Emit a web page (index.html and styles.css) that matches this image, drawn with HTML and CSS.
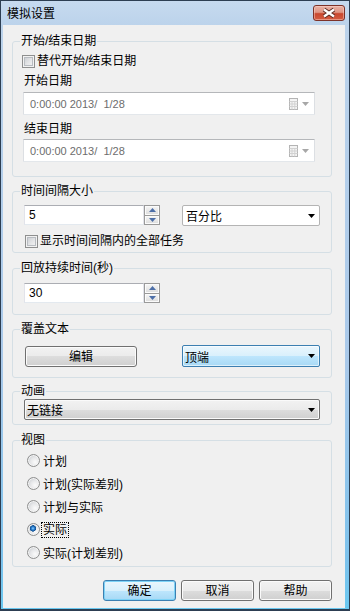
FILE: index.html
```html
<!DOCTYPE html>
<html lang="zh-CN">
<head>
<meta charset="utf-8">
<title>模拟设置</title>
<link rel="stylesheet" href="styles.css">
</head>
<body>
<div class="window">
  <div class="titlebar">
    <span class="title">模拟设置</span>
    <span class="close">
      <svg width="30" height="14" viewBox="0 0 30 14">
        <path d="M10 3.6 L20 10.4 M20 3.6 L10 10.4" stroke="#5a2a22" stroke-width="4.2" fill="none"/>
        <path d="M10 3.6 L20 10.4 M20 3.6 L10 10.4" stroke="#ffffff" stroke-width="2.4" fill="none"/>
      </svg>
    </span>
  </div>
  <div class="client">
    <fieldset class="group g1">
      <legend>开始/结束日期</legend>
      <div class="checkrow c1"><span class="box"></span><span>替代开始/结束日期</span></div>
      <div class="lbl">开始日期</div>
      <div class="datebox d1">
        <span class="dtext">0:00:00 2013/  1/28</span>
        <svg class="cal" width="9" height="12" viewBox="0 0 9 12"><rect x="0.5" y="0.5" width="8" height="11" fill="#f4f4f4" stroke="#b4b4b4"/><path d="M0.5 3.5H8.5M0.5 6H8.5M0.5 8.5H8.5M3 3.5V11.5M5.8 3.5V11.5" stroke="#d2d2d2" fill="none"/></svg>
        <svg class="dd" width="7" height="4" viewBox="0 0 7 4"><polygon points="0,0 7,0 3.5,4" fill="#a7a7a7"/></svg>
      </div>
      <div class="lbl l2">结束日期</div>
      <div class="datebox d2">
        <span class="dtext">0:00:00 2013/  1/28</span>
        <svg class="cal" width="9" height="12" viewBox="0 0 9 12"><rect x="0.5" y="0.5" width="8" height="11" fill="#f4f4f4" stroke="#b4b4b4"/><path d="M0.5 3.5H8.5M0.5 6H8.5M0.5 8.5H8.5M3 3.5V11.5M5.8 3.5V11.5" stroke="#d2d2d2" fill="none"/></svg>
        <svg class="dd" width="7" height="4" viewBox="0 0 7 4"><polygon points="0,0 7,0 3.5,4" fill="#a7a7a7"/></svg>
      </div>
    </fieldset>

    <fieldset class="group g2">
      <legend>时间间隔大小</legend>
      <div class="row r2">
        <div class="spin">
          <span class="spin-text">5</span>
          <span class="spin-btns">
            <span class="sb"><svg width="7" height="4" viewBox="0 0 7 4"><polygon points="0,4 7,4 3.5,0" fill="#4d6fa8"/></svg></span>
            <span class="sb"><svg width="7" height="4" viewBox="0 0 7 4"><polygon points="0,0 7,0 3.5,4" fill="#4d6fa8"/></svg></span>
          </span>
        </div>
        <div class="combo white pct">
          <span>百分比</span>
          <svg class="arrow" width="7" height="4" viewBox="0 0 7 4"><polygon points="0,0 7,0 3.5,4" fill="#000"/></svg>
        </div>
      </div>
      <div class="checkrow c2"><span class="box"></span><span>显示时间间隔内的全部任务</span></div>
    </fieldset>

    <fieldset class="group g3">
      <legend>回放持续时间(秒)</legend>
      <div class="row r3">
        <div class="spin">
          <span class="spin-text">30</span>
          <span class="spin-btns">
            <span class="sb"><svg width="7" height="4" viewBox="0 0 7 4"><polygon points="0,4 7,4 3.5,0" fill="#4d6fa8"/></svg></span>
            <span class="sb"><svg width="7" height="4" viewBox="0 0 7 4"><polygon points="0,0 7,0 3.5,4" fill="#4d6fa8"/></svg></span>
          </span>
        </div>
      </div>
    </fieldset>

    <fieldset class="group g4">
      <legend>覆盖文本</legend>
      <div class="row r4">
        <div class="btn edit">编辑</div>
        <div class="combo blue top">
          <span>顶端</span>
          <svg class="arrow" width="7" height="4" viewBox="0 0 7 4"><polygon points="0,0 7,0 3.5,4" fill="#000"/></svg>
        </div>
      </div>
    </fieldset>

    <fieldset class="group g5">
      <legend>动画</legend>
      <div class="combo gray anim">
        <span>无链接</span>
        <svg class="arrow" width="7" height="4" viewBox="0 0 7 4"><polygon points="0,0 7,0 3.5,4" fill="#000"/></svg>
      </div>
    </fieldset>

    <fieldset class="group g6">
      <legend>视图</legend>
      <div class="radiorow first"><span class="radio"></span><span>计划</span></div>
      <div class="radiorow"><span class="radio"></span><span>计划(实际差别)</span></div>
      <div class="radiorow"><span class="radio"></span><span>计划与实际</span></div>
      <div class="radiorow"><span class="radio on"></span><span class="focus">实际</span></div>
      <div class="radiorow"><span class="radio"></span><span>实际(计划差别)</span></div>
    </fieldset>

    <div class="buttons">
      <div class="btn default">确定</div>
      <div class="btn">取消</div>
      <div class="btn">帮助</div>
    </div>
  </div>
</div>
</body>
</html>
```
FILE: styles.css
```css
* { box-sizing: border-box; }
html, body { margin: 0; padding: 0; }
body {
  width: 350px;
  height: 611px;
  overflow: hidden;
  font-family: "Liberation Sans", "Noto Sans CJK SC", sans-serif;
  font-size: 12px;
  color: #000;
  background: #fff;
}
.window {
  width: 350px;
  height: 611px;
  border: 1px solid #2d3e52;
  border-bottom-width: 2px;
  padding: 0 4px 1px 2px;
  background: linear-gradient(#c6daef 0px, #bcd3eb 24px, #a9c9ea 60%, #7cc2ec 92%, #6ac8f0 100%);
  display: flex;
  flex-direction: column;
}
.titlebar {
  height: 24px;
  display: flex;
  align-items: flex-start;
  flex: none;
}
.title {
  margin-top: 5px;
  padding-left: 4px;
  line-height: 16px;
  height: 16px;
}
.close {
  margin-left: auto;
  margin-top: 4px;
  width: 32px;
  height: 16px;
  border: 1px solid #7d3228;
  border-radius: 3px;
  background: linear-gradient(#eab2a5 0%, #df9584 45%, #c9482f 55%, #d45d43 100%);
  box-shadow: inset 0 0 0 1px rgba(255, 220, 210, 0.45);
  display: flex;
}
.close svg { display: block; }
.client {
  flex: 1;
  background: #f0f0f0;
  padding: 9px 0 0 9px;
  display: flex;
  flex-direction: column;
}
.group {
  margin: 0;
  width: 320px;
  min-width: 0;
  border: 1px solid #d5dfe5;
  border-radius: 3px;
  padding: 0 0 0 7px;
}
.group legend {
  padding: 0 1px;
  margin: 0;
  height: 15px;
  line-height: 15px;
}
.g1 { padding-bottom: 14px; }
.g2 { margin-top: 7px; padding-bottom: 3px; }
.g3 { margin-top: 8px; padding-bottom: 11px; }
.g4 { margin-top: 7px; padding-bottom: 10px; }
.g5 { margin-top: 6px; padding-bottom: 4px; }
.g6 { margin-top: 8px; padding-bottom: 2px; }

.checkrow {
  display: flex;
  align-items: center;
  height: 16px;
  line-height: 16px;
  gap: 2px;
}
.c1 { margin-top: 4px; margin-left: 2px; }
.c2 { margin-top: 7px; margin-left: 5px; }
.box {
  width: 13px;
  height: 13px;
  flex: none;
  border: 1px solid #8e8f8f;
  background: linear-gradient(135deg, #c3c7cc 0%, #e4e5e7 55%, #f7f7f7 100%);
  box-shadow: inset 0 0 0 1px #f2f2f2, inset 0 0 0 2px #b8bcc1;
}
.lbl {
  height: 16px;
  line-height: 16px;
  margin-top: 4px;
  margin-left: 4px;
}
.lbl.l2 { margin-top: 6px; }

.datebox {
  width: 292px;
  height: 23px;
  margin-left: 3px;
  background: #fff;
  border: 1px solid;
  border-color: #b5b7ba #dcdfe3 #e3e7eb #dcdfe3;
  border-radius: 1px;
  display: flex;
  align-items: center;
  padding-left: 6px;
  padding-right: 5px;
}
.d1 { margin-top: 3px; }
.d2 { margin-top: 2px; }
.dtext {
  white-space: pre;
  font-size: 11px;
  color: #6d6d6d;
}
.cal { margin-left: auto; display: block; }
.dd { margin-left: 4px; display: block; }

.row {
  display: flex;
  align-items: flex-start;
  margin-left: 4px;
}
.r2 { margin-top: 6px; height: 21px; }
.r3 { margin-top: 7px; height: 20px; }
.r4 { margin-top: 8px; height: 22px; margin-left: 5px; }

.spin {
  width: 136px;
  height: 20px;
  display: flex;
}
.spin-text {
  flex: 1;
  background: #fff;
  border: 1px solid;
  border-color: #abadb3 #e2e3ea #e3e9ef #e2e3ea;
  padding-left: 4px;
  line-height: 18px;
}
.spin-btns {
  width: 16px;
  display: flex;
  flex-direction: column;
  gap: 1px;
  background: #9a9a9a;
  border: 1px solid #9a9a9a;
}
.sb {
  flex: 1;
  display: flex;
  align-items: center;
  justify-content: center;
  background: linear-gradient(#f6f6f6, #dcdcdc);
  box-shadow: inset 0 0 0 1px #fbfbfb;
}
.sb svg { display: block; }

.combo {
  display: flex;
  align-items: center;
  border: 1px solid;
  border-radius: 2px;
  padding: 0 4px 0 3px;
}
.arrow { margin-left: auto; display: block; }
.combo.white {
  background: #fff;
  border-color: #b4b4b4;
}
.pct { width: 138px; height: 21px; margin-left: 22px; }
.combo.blue {
  border-color: #3c7fb1;
  background: linear-gradient(#eaf6fd 0%, #d9f0fc 50%, #bee6fd 50%, #a7d9f5 100%);
  box-shadow: inset 0 0 0 1px rgba(255, 255, 255, 0.6);
}
.top { width: 138px; height: 22px; margin-left: 45px; padding-left: 2px; }
.combo.gray {
  border-color: #707070;
  background: linear-gradient(#f2f2f2 0%, #ebebeb 50%, #dddddd 50%, #cfcfcf 100%);
  box-shadow: inset 0 0 0 1px #fafafa;
}
.anim { width: 296px; height: 21px; margin-left: 4px; padding-left: 2px; }

.btn {
  width: 73px;
  height: 21px;
  border: 1px solid #707070;
  border-radius: 3px;
  background: linear-gradient(#f2f2f2 0%, #ebebeb 50%, #dddddd 50%, #cfcfcf 100%);
  box-shadow: inset 0 0 0 1px #fbfbfb;
  display: flex;
  align-items: center;
  justify-content: center;
  line-height: 16px;
}
.btn.edit { width: 112px; margin-top: 1px; }
.btn.default {
  border-color: #3c7fb1;
  background: linear-gradient(#eaf6fd 0%, #d9f0fc 50%, #bee6fd 50%, #a7d9f5 100%);
  box-shadow: inset 0 0 0 1px #7ed3f7;
}

.radiorow {
  display: flex;
  align-items: center;
  height: 23px;
  margin-left: 7px;
  gap: 3px;
}
.radiorow.first { margin-top: 1px; }
.radio {
  width: 13px;
  height: 13px;
  flex: none;
  border-radius: 50%;
  border: 1px solid #8e8f8f;
  background: radial-gradient(circle at 65% 65%, #fbfbfb 0%, #e6e7e9 45%, #bcc0c5 100%);
  box-shadow: inset 0 0 0 1px #f4f4f4;
}
.radio.on {
  background:
    radial-gradient(circle at 45% 40%, #8fd0ff 0px, #2a7fd0 1.6px, #0d4a8a 3px, transparent 3.4px),
    radial-gradient(circle at 65% 65%, #fbfbfb 0%, #e6e7e9 45%, #bcc0c5 100%);
}
.focus {
  outline: 1px dotted #000;
  outline-offset: 0;
  padding: 0 1px;
  margin-left: -1px;
  line-height: 14px;
}

.buttons {
  width: 320px;
  margin-top: 13px;
  display: flex;
  justify-content: flex-end;
  gap: 5px;
}
```
